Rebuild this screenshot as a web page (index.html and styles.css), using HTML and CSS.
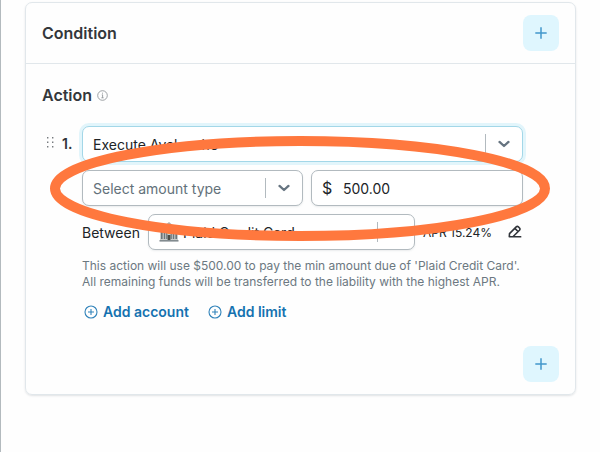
FILE: index.html
```html
<!DOCTYPE html>
<html lang="en">
<head>
    <meta charset="UTF-8">
    <meta name="viewport" content="width=device-width, initial-scale=1.0">
    <title>Edit rule</title>
    <link rel="stylesheet" href="styles.css">
</head>
<body>
    <div class="card">
        <div class="condition">
            <h2>Condition</h2>
            <button class="plus-btn" aria-label="Add condition">
                <svg width="12" height="12" viewBox="0 0 12 12"><path d="M6 .3v11.4M.3 6h11.4"/></svg>
            </button>
        </div>
        <div class="action">
            <div class="action-title">
                <h2>Action</h2>
                <svg class="info" width="11" height="11" viewBox="0 0 11 11"><circle cx="5.5" cy="5.5" r="4.8"/><path d="M4.8 4.8h.8v3M4.4 7.8h2.2M5.5 2.7v1"/></svg>
            </div>
            <div class="step">
                <svg class="drag" width="7" height="11" viewBox="0 0 7 11">
                    <path d="M0 0h1.4v1.4H0zM5 0h1.4v1.4H5zM0 4.5h1.4v1.4H0zM5 4.5h1.4v1.4H5zM0 9h1.4v1.4H0zM5 9h1.4v1.4H5z"/>
                </svg>
                <span class="number">1.</span>
                <div class="fields">
                    <div class="select focused">
                        <span class="value">Execute Avalanche</span>
                        <span class="arrow"><svg width="12" height="8" viewBox="0 0 12 8"><path d="M1.5 1.9 6 6l4.5-4.1"/></svg></span>
                    </div>
                    <div class="row">
                        <div class="select amount-type">
                            <span class="value placeholder">Select amount type</span>
                            <span class="arrow"><svg width="12" height="8" viewBox="0 0 12 8"><path d="M1.5 1.9 6 6l4.5-4.1"/></svg></span>
                        </div>
                        <div class="amount"><span class="dollar">$</span><span>500.00</span></div>
                    </div>
                    <div class="row between">
                        <span class="between-label">Between</span>
                        <div class="select account">
                            <svg class="bank" width="20" height="20" viewBox="0 0 20 20">
                                <path fill="#aab1b4" d="M10 0l6 5v3H4V5z"/>
                                <path fill="#c8cbc9" d="M1 8h18v11H1z"/>
                                <path fill="#6b767b" d="M2 9h1.6v8H2zM4.8 9h1.4v8H4.8zM7.2 8H8.4v9H7.2zM11.6 8h1.2v9h-1.2zM13.8 9h1.4v8h-1.4zM16.4 9H18v8h-1.6z"/>
                                <path fill="#d6b54b" d="M8.6 8.5h2.8V12H8.6z"/>
                                <path fill="#4c4d47" d="M8.6 13h2.8v5H8.6z"/>
                                <path fill="#828b8f" d="M.5 18h19v1.6H.5z"/>
                            </svg>
                            <span class="value">Plaid Credit Card</span>
                            <span class="arrow"><svg width="12" height="8" viewBox="0 0 12 8"><path d="M1.5 1.9 6 6l4.5-4.1"/></svg></span>
                        </div>
                        <span class="apr">APR 15.24%</span>
                        <svg class="edit" width="14" height="14" viewBox="0 0 14 14">
                            <path d="M1.3 11.8 1.5 8.6 8.2 1.9q1.1-1 2.2 0l1.1 1.1q1 1.1 0 2.2L4.9 11.8zM6.9 3.4l3.1 3.1M4.9 11.8h8.4"/>
                        </svg>
                    </div>
                    <p class="help">This action will use $500.00 to pay the min amount due of 'Plaid Credit Card'.<br>All remaining funds will be transferred to the liability with the highest APR.</p>
                    <div class="links">
                        <a><svg width="14" height="14" viewBox="0 0 14 14"><circle cx="7" cy="7" r="6"/><path d="M7 4v6M4 7h6"/></svg><span class="add-account">Add account</span></a>
                        <a><svg width="14" height="14" viewBox="0 0 14 14"><circle cx="7" cy="7" r="6"/><path d="M7 4v6M4 7h6"/></svg><span class="add-limit">Add limit</span></a>
                    </div>
                </div>
            </div>
            <button class="plus-btn" aria-label="Add action">
                <svg width="12" height="12" viewBox="0 0 12 12"><path d="M6 .3v11.4M.3 6h11.4"/></svg>
            </button>
        </div>
    </div>
    <svg class="highlight" width="500" height="105" viewBox="0 0 500 105"><ellipse cx="250" cy="52.5" rx="245" ry="47.5"/></svg>
</body>
</html>
```
FILE: styles.css
```css
* {
    box-sizing: border-box;
}
body {
    margin: 0;
    height: 452px;
    padding: 2px 0 0 24px;
    border-left: 1px solid #b3babe;
    background: #fefefe;
    font-family: Inter, "Liberation Sans", sans-serif;
    font-size: 14px;
    color: #202427;
    position: relative;
    overflow: hidden;
}
svg {
    display: block;
    flex: none;
    fill: none;
}
h2 {
    margin: 0;
    font-size: 16px;
    line-height: 20px;
    font-weight: 600;
    color: #34373b;
}
.card {
    width: 551px;
    height: 393px;
    border: 1px solid #e1e7eb;
    border-radius: 7px;
    box-shadow: 0 1px 2px rgba(60, 75, 85, 0.15);
}
.condition {
    height: 61px;
    padding: 0 16px;
    border-bottom: 1px solid #e1e7eb;
    display: flex;
    align-items: center;
    justify-content: space-between;
}
.plus-btn {
    width: 36px;
    height: 36px;
    padding: 0;
    border: none;
    border-radius: 8px;
    background: #dff6fe;
    display: flex;
    align-items: center;
    justify-content: center;
}
.plus-btn svg {
    stroke: #4297cb;
    stroke-width: 1.5;
}
.action {
    height: 330px;
    padding: 21px 16px 12px;
    display: flex;
    flex-direction: column;
}
.action > .plus-btn {
    margin: auto 0 0 auto;
}
.action-title {
    display: flex;
    align-items: center;
    gap: 5px;
}
.info {
    stroke: #868b8f;
    stroke-width: 0.8;
}
.step {
    display: flex;
    margin-top: 21px;
}
.drag {
    margin: 11px 8px 0 5px;
    fill: #777b7f;
}
.number {
    width: 20px;
    line-height: 36px;
    font-weight: 600;
    color: #303338;
}
.fields {
    width: 441px;
}
.select,
.amount {
    height: 36px;
    border: 1px solid #b2babf;
    border-radius: 7px;
    background: #fff;
    padding-left: 10px;
    display: flex;
    align-items: center;
    box-shadow: 0 1px 2px rgba(60, 75, 85, 0.1);
}
.focused {
    border-color: #a3d7e8;
    box-shadow: 0 0 0 3px #e2f5fb;
}
.value {
    flex: 1;
    white-space: nowrap;
}
.placeholder {
    color: #63717a;
}
.arrow {
    width: 37px;
    height: 20px;
    border-left: 1px solid #b2babf;
    display: flex;
    align-items: center;
    justify-content: center;
}
.arrow svg {
    stroke: #667480;
    stroke-width: 2.3;
    stroke-linecap: round;
    stroke-linejoin: round;
}
.row {
    display: flex;
    align-items: center;
    gap: 8px;
    margin-top: 8px;
}
.amount-type {
    width: 221px;
}
.amount {
    width: 212px;
}
.dollar {
    width: 21px;
    font-size: 16px;
}
.between-label {
    width: 58px;
    white-space: nowrap;
}
.account {
    width: 267px;
}
.bank {
    margin-right: 4px;
}
.apr {
    font-size: 12px;
    width: 70px;
    white-space: nowrap;
}
.edit {
    margin-left: 7px;
    stroke: #30343a;
    stroke-width: 1.6;
    stroke-linejoin: round;
}
.help {
    margin: 8px 0 0;
    font-size: 12px;
    line-height: 16px;
    color: #6c7881;
    white-space: nowrap;
}
.links {
    display: flex;
    gap: 19px;
    margin: 12px 0 0 2px;
}
.links a {
    display: flex;
    align-items: center;
    gap: 5px;
    line-height: 20px;
    font-weight: 600;
    color: #1572b0;
}
.links svg {
    stroke: #3183ba;
    stroke-width: 1.1;
}
/* hand-drawn style marker round the amount fields */
.highlight {
    position: absolute;
    left: 49px;
    top: 136px;
    stroke: #ff783e;
    stroke-width: 10;
}
```
